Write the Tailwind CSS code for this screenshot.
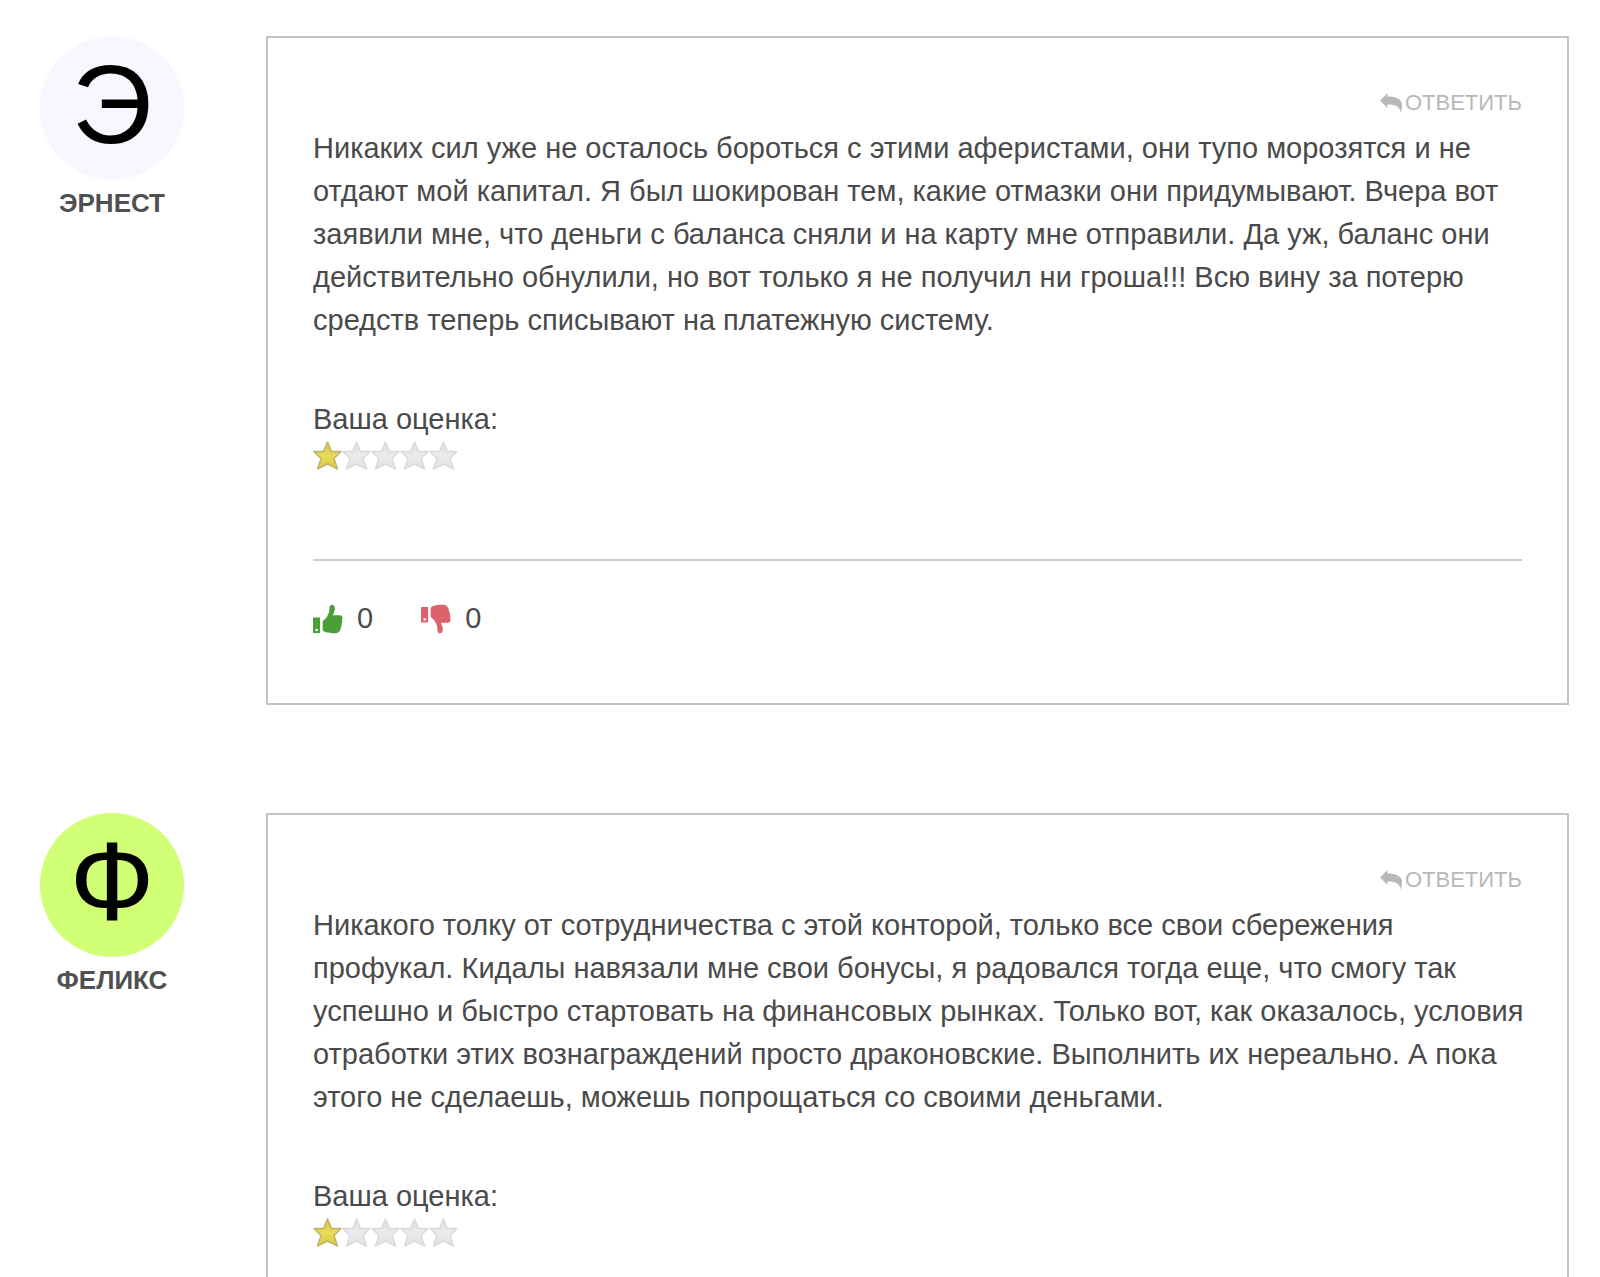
<!DOCTYPE html>
<html lang="ru">
<head>
<meta charset="utf-8">
<meta name="viewport" content="width=device-width, initial-scale=1">
<title>Отзывы</title>
<script src="https://cdn.jsdelivr.net/npm/@tailwindcss/browser@4"></script>
</head>
<body class="bg-white font-['Liberation_Sans',Arial,sans-serif] text-[29px] leading-[43px] text-[#4a4a4a]">
<svg class="absolute size-0" aria-hidden="true">
  <defs>
    <linearGradient id="gold" x1="0" y1="0" x2="0" y2="1"><stop offset="0" stop-color="#d3c052"/><stop offset=".5" stop-color="#eadb58"/><stop offset="1" stop-color="#d8ca48"/></linearGradient>
    <linearGradient id="silver" x1="0" y1="0" x2="0" y2="1"><stop offset="0" stop-color="#dcdcdc"/><stop offset=".5" stop-color="#ececec"/><stop offset="1" stop-color="#e2e2e2"/></linearGradient>
    <symbol id="star" viewBox="0 0 29 30"><path d="M14.500 1 18.500 10.500h9.500l-7 7 3.500 10.500-10-5-10 5L8 17.500 1 10.500h9.500z" stroke-width="1.500" stroke-linejoin="round"/></symbol>
    <symbol id="hand" viewBox="0 0 90 90"><path d="M29 54Q29 51 32 49C41 43 45 33 48 25 50 20 47 2 57 2c9 0 10 12 7 20L60 34H80C88 34 91 40 87 47 89 51 88 56 86 59 87 64 85 68 83 71 83 76 82 79 79 82 75 88 70 88 63 88 50 88 35 86 29 79z"/></symbol>
    <symbol id="cuff" viewBox="0 0 22 48"><path fill-rule="evenodd" d="M4 0h14q4 0 4 4v40q0 4-4 4H4q-4 0-4-4V4q0-4 4-4zm7 34a4 4 0 1 0 0 8 4 4 0 0 0 0-8z"/></symbol>
    <symbol id="reply" viewBox="0 0 22 20"><path d="M0 7.500 7.500 0v3.500C16 3.500 22 6 22 12c0 3-.5 5-1.500 7.500C20 14 16 11.500 7.500 11.500V15z"/></symbol>
  </defs>
</svg>
<main class="flex flex-col gap-27 pt-9 pr-[31px] pl-10">

  <article class="flex items-start gap-[82px]">
    <div class="flex w-36 shrink-0 flex-col items-center">
      <div class="flex size-36 items-center justify-center rounded-full bg-[#f8f7ff] pb-1.5 text-[112px] leading-none text-black">Э</div>
      <h2 class="mt-[3px] text-[26px] leading-10 font-bold whitespace-nowrap text-[#505050]">ЭРНЕСТ</h2>
    </div>
    <div class="min-w-0 flex-1 border-2 border-[#c4c4c4] px-[45px] pt-[43px] pb-[63px]">
      <div class="flex justify-end">
        <a href="#" class="flex items-center gap-[3px] text-[22px] text-[#b8b8b8]"><svg class="h-5 w-[22px] fill-current" aria-hidden="true"><use href="#reply"/></svg>ОТВЕТИТЬ</a>
      </div>
      <p class="mt-[3px] -mr-3">Никаких сил уже не осталось бороться с этими аферистами, они тупо морозятся и не<br>отдают мой капитал. Я был шокирован тем, какие отмазки они придумывают. Вчера вот<br>заявили мне, что деньги с баланса сняли и на карту мне отправили. Да уж, баланс они<br>действительно обнулили, но вот только я не получил ни гроша!!! Всю вину за потерю<br>средств теперь списывают на платежную систему.</p>
      <div class="mt-14">Ваша оценка:</div>
      <div class="flex" role="img" aria-label="1 из 5">
        <svg class="h-[30px] w-[29px] fill-[url(#gold)] stroke-[#c0b468]"><use href="#star"/></svg>
        <svg class="h-[30px] w-[29px] fill-[url(#silver)] stroke-[#dadada]"><use href="#star"/></svg>
        <svg class="h-[30px] w-[29px] fill-[url(#silver)] stroke-[#dadada]"><use href="#star"/></svg>
        <svg class="h-[30px] w-[29px] fill-[url(#silver)] stroke-[#dadada]"><use href="#star"/></svg>
        <svg class="h-[30px] w-[29px] fill-[url(#silver)] stroke-[#dadada]"><use href="#star"/></svg>
      </div>
      <hr class="mt-[88px] border-t-2 border-[#cccccc]">
      <div class="mt-9 flex gap-12">
        <button type="button" class="flex items-center gap-[14px]"><svg viewBox="0 0 90 90" class="size-[30px] fill-[#4b9f38]" aria-hidden="true"><use href="#cuff" y="40" width="22" height="48"/><use href="#hand" width="90" height="90"/></svg>0</button>
        <button type="button" class="flex items-center gap-[14px]"><svg viewBox="0 0 90 90" class="size-[30px] fill-[#dc626c]" aria-hidden="true"><use href="#cuff" y="8" width="22" height="48"/><use href="#hand" width="90" height="90" transform="matrix(1 0 0 -1 0 90)"/></svg>0</button>
      </div>
    </div>
  </article>

  <article class="flex items-start gap-[82px]">
    <div class="flex w-36 shrink-0 flex-col items-center">
      <div class="flex size-36 items-center justify-center rounded-full bg-[#d1ff76] pb-1.5 text-[112px] leading-none text-black">Ф</div>
      <h2 class="mt-[3px] text-[26px] leading-10 font-bold whitespace-nowrap text-[#505050]">ФЕЛИКС</h2>
    </div>
    <div class="min-w-0 flex-1 border-2 border-[#c4c4c4] px-[45px] pt-[43px] pb-[63px]">
      <div class="flex justify-end">
        <a href="#" class="flex items-center gap-[3px] text-[22px] text-[#b8b8b8]"><svg class="h-5 w-[22px] fill-current" aria-hidden="true"><use href="#reply"/></svg>ОТВЕТИТЬ</a>
      </div>
      <p class="mt-[3px] -mr-3">Никакого толку от сотрудничества с этой конторой, только все свои сбережения<br>профукал. Кидалы навязали мне свои бонусы, я радовался тогда еще, что смогу так<br>успешно и быстро стартовать на финансовых рынках. Только вот, как оказалось, условия<br>отработки этих вознаграждений просто драконовские. Выполнить их нереально. А пока<br>этого не сделаешь, можешь попрощаться со своими деньгами.</p>
      <div class="mt-14">Ваша оценка:</div>
      <div class="flex" role="img" aria-label="1 из 5">
        <svg class="h-[30px] w-[29px] fill-[url(#gold)] stroke-[#c0b468]"><use href="#star"/></svg>
        <svg class="h-[30px] w-[29px] fill-[url(#silver)] stroke-[#dadada]"><use href="#star"/></svg>
        <svg class="h-[30px] w-[29px] fill-[url(#silver)] stroke-[#dadada]"><use href="#star"/></svg>
        <svg class="h-[30px] w-[29px] fill-[url(#silver)] stroke-[#dadada]"><use href="#star"/></svg>
        <svg class="h-[30px] w-[29px] fill-[url(#silver)] stroke-[#dadada]"><use href="#star"/></svg>
      </div>
    </div>
  </article>
</main>
</body>
</html>
